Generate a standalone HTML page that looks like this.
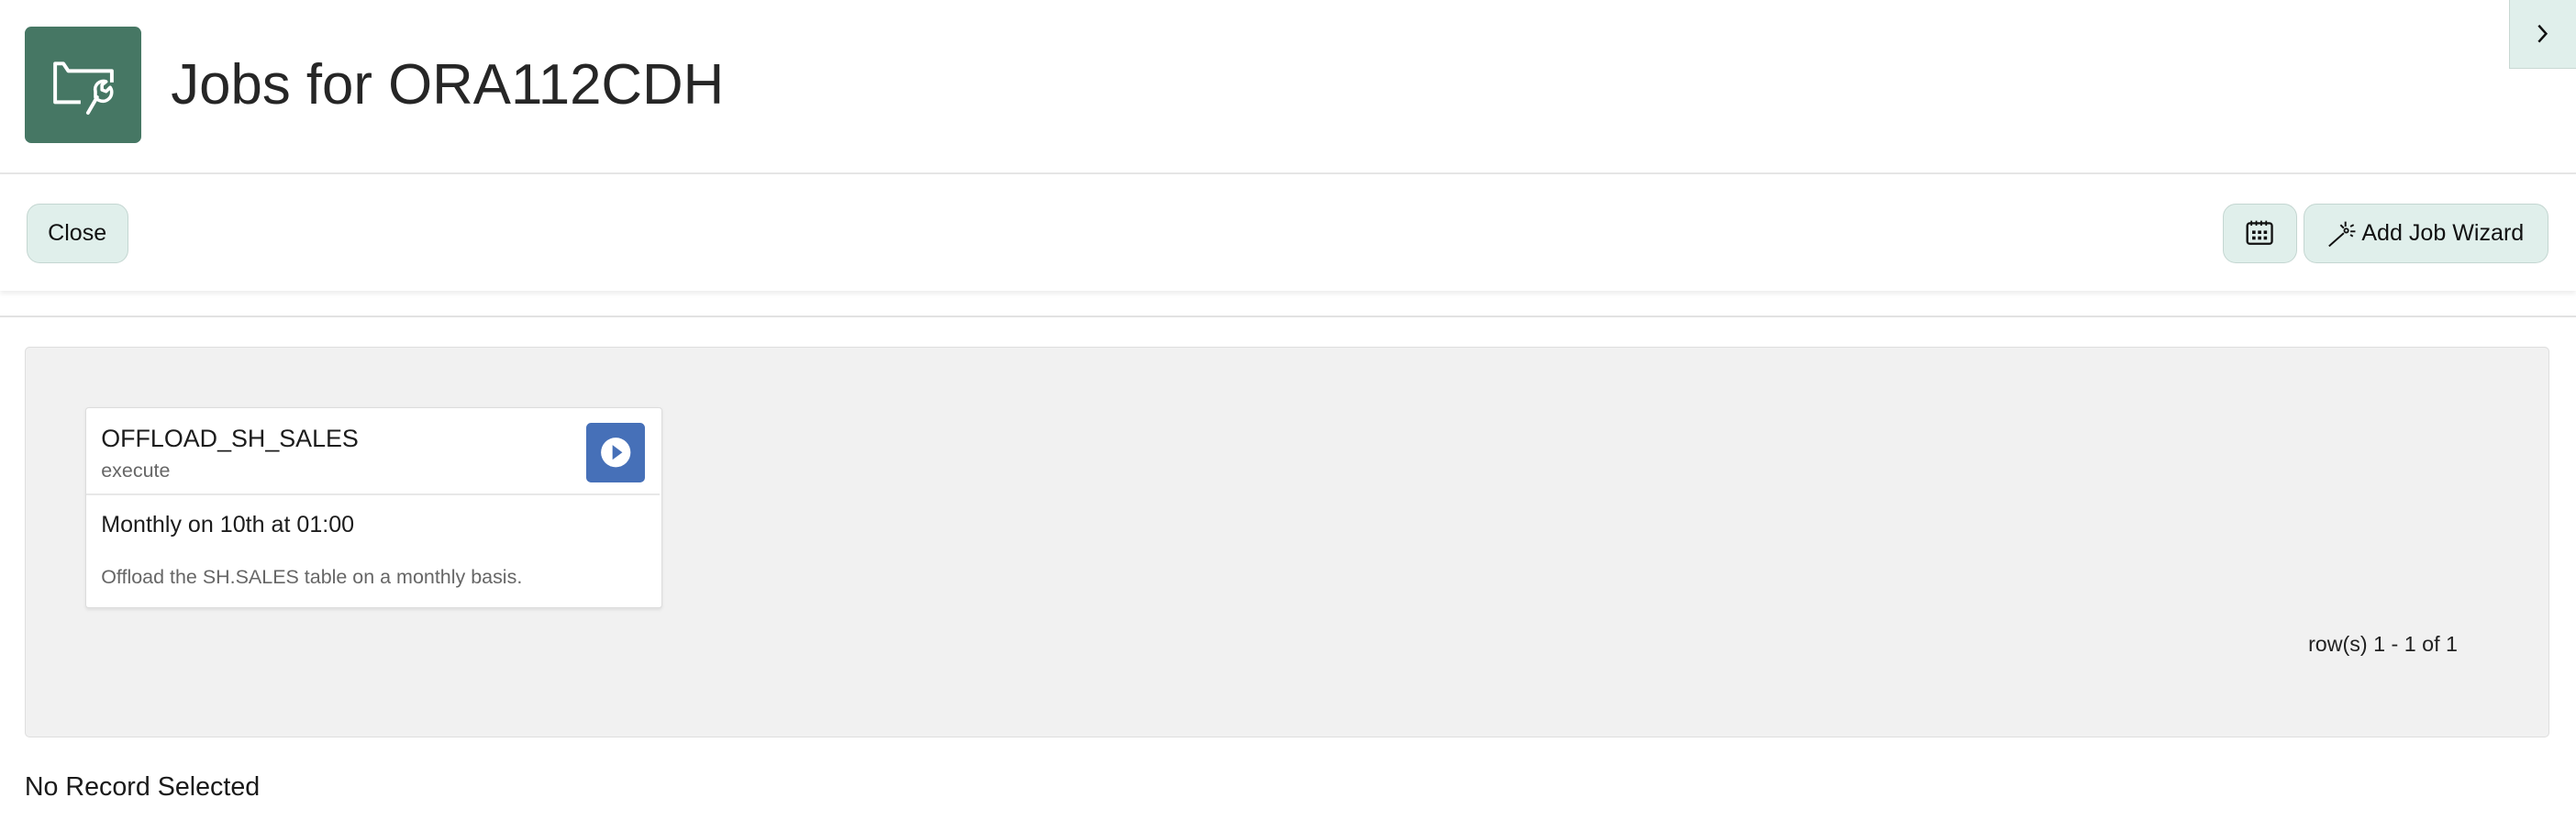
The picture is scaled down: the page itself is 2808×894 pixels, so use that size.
<!DOCTYPE html>
<html><head><meta charset="utf-8"><style>
html,body{margin:0;padding:0;background:#fff;overflow:hidden}
body{zoom:1.7908;width:1568px;height:499px;position:relative;font-family:"Liberation Sans",Arial,sans-serif;color:#1a1a1a}
.abs{position:absolute}
.icon{left:15px;top:16px;width:71px;height:71px;background:#467764;border-radius:4px}
.title{left:104px;top:30px;font-size:34.5px;line-height:44px;color:#262626}
.hsep{left:0;top:105px;width:1568px;height:1px;background:#e6e6e6}
.toolbar{left:0;top:106px;width:1568px;height:71px;box-shadow:0 2px 3px rgba(0,0,0,.08);background:#fff}
.btn{background:#e0efeb;border:1px solid #c4d6d1;border-radius:8px;box-sizing:border-box;height:36px;font-size:14px;display:flex;align-items:center;justify-content:center;color:#111}
.sep2{left:0;top:192px;width:1568px;height:1px;background:#e2e2e2}
.region{left:15px;top:211px;width:1537px;height:238px;background:#f1f1f1;border:1px solid #dedede;border-radius:3px;box-sizing:border-box}
.card{left:52px;top:248px;width:351px;height:122px;background:#fff;border:1px solid #ddd;border-radius:2px;box-sizing:border-box;box-shadow:0 1px 2px rgba(0,0,0,.08)}
.tab{left:1527px;top:0;width:41px;height:42px;background:#e0efeb;border-left:1px solid #c8d8d3;border-bottom:1px solid #c8d8d3;box-sizing:border-box}
</style></head><body>
<div class="abs icon"><svg width="71" height="71" viewBox="0 0 71 71"><path d="M34 46 H18.5 V22.5 H23.5 L26.5 27 H53 V34" fill="none" stroke="#fff" stroke-width="2.2" stroke-linejoin="round"/><path d="M38.5 52.5 L44 43" fill="none" stroke="#fff" stroke-width="2.2" stroke-linecap="round"/><path d="M43 43 a5 5 0 0 0 9 -6 l-2.5 2.5 -2.5 -1 0 -3 2.5 -2 a5 5 0 0 0 -6.5 6 z" fill="none" stroke="#fff" stroke-width="2" stroke-linejoin="round"/></svg></div>
<div class="abs title">Jobs for ORA112CDH</div>
<div class="abs tab"><svg width="40" height="41" viewBox="0 0 40 41"><path d="M17.5 15.5 L22 20.5 L17.5 25.5" fill="none" stroke="#111" stroke-width="1.4"/></svg></div>
<div class="abs hsep"></div>
<div class="abs toolbar"></div>
<div class="abs btn" style="left:16px;top:124px;width:62px">Close</div>
<div class="abs btn" style="left:1353px;top:124px;width:45px"><svg width="18" height="18" viewBox="0 0 18 18"><rect x="1.5" y="3" width="15" height="12.5" rx="1.5" fill="none" stroke="#111" stroke-width="1.3"/><path d="M4 1.5v3M7 1.5v3M10 1.5v3M13 1.5v3" stroke="#111" stroke-width="1"/><rect x="4.5" y="7.5" width="2" height="2" fill="#111"/><rect x="8" y="7.5" width="2" height="2" fill="#111"/><rect x="11.5" y="7.5" width="2" height="2" fill="#111"/><rect x="4.5" y="11" width="2" height="2" fill="#111"/><rect x="8" y="11" width="2" height="2" fill="#111"/><rect x="11.5" y="11" width="2" height="2" fill="#111"/></svg></div>
<div class="abs btn" style="left:1402px;top:124px;width:149px;justify-content:flex-start;padding-left:14px"><svg width="18" height="18" viewBox="0 0 18 18" style="margin-right:3px"><path d="M1 17 L10 9 M11 2v3M14 5l2-1M14 8h3M8 4l2 2M14 10l1.5 1" stroke="#111" stroke-width="1.1" fill="none"/><circle cx="11.5" cy="7.5" r="1.2" fill="none" stroke="#111"/></svg>Add Job Wizard</div>
<div class="abs sep2"></div>
<div class="abs region"></div>
<div class="abs card">
 <div class="abs" style="left:9px;top:10px;font-size:15px;color:#1c1c1c">OFFLOAD_SH_SALES</div>
 <div class="abs" style="left:9px;top:31px;font-size:12px;color:#666">execute</div>
 <div class="abs" style="left:304px;top:9px;width:36px;height:36px;background:#4670b8;border-radius:3px"><svg width="36" height="36" viewBox="0 0 36 36"><circle cx="18" cy="18" r="9" fill="#fff"/><path d="M16 13.5 L22 18 L16 22.5Z" fill="#4670b8"/></svg></div>
 <div class="abs" style="left:0;top:52px;width:349px;height:1px;background:#e8e8e8"></div>
 <div class="abs" style="left:9px;top:63px;font-size:14px;color:#1c1c1c">Monthly on 10th at 01:00</div>
 <div class="abs" style="left:9px;top:96px;font-size:12px;color:#666">Offload the SH.SALES table on a monthly basis.</div>
</div>
<div class="abs" style="left:1405px;top:385px;font-size:13px;color:#222">row(s) 1 - 1 of 1</div>
<div class="abs" style="left:15px;top:470px;font-size:16px;color:#1a1a1a">No Record Selected</div>
</body></html>
